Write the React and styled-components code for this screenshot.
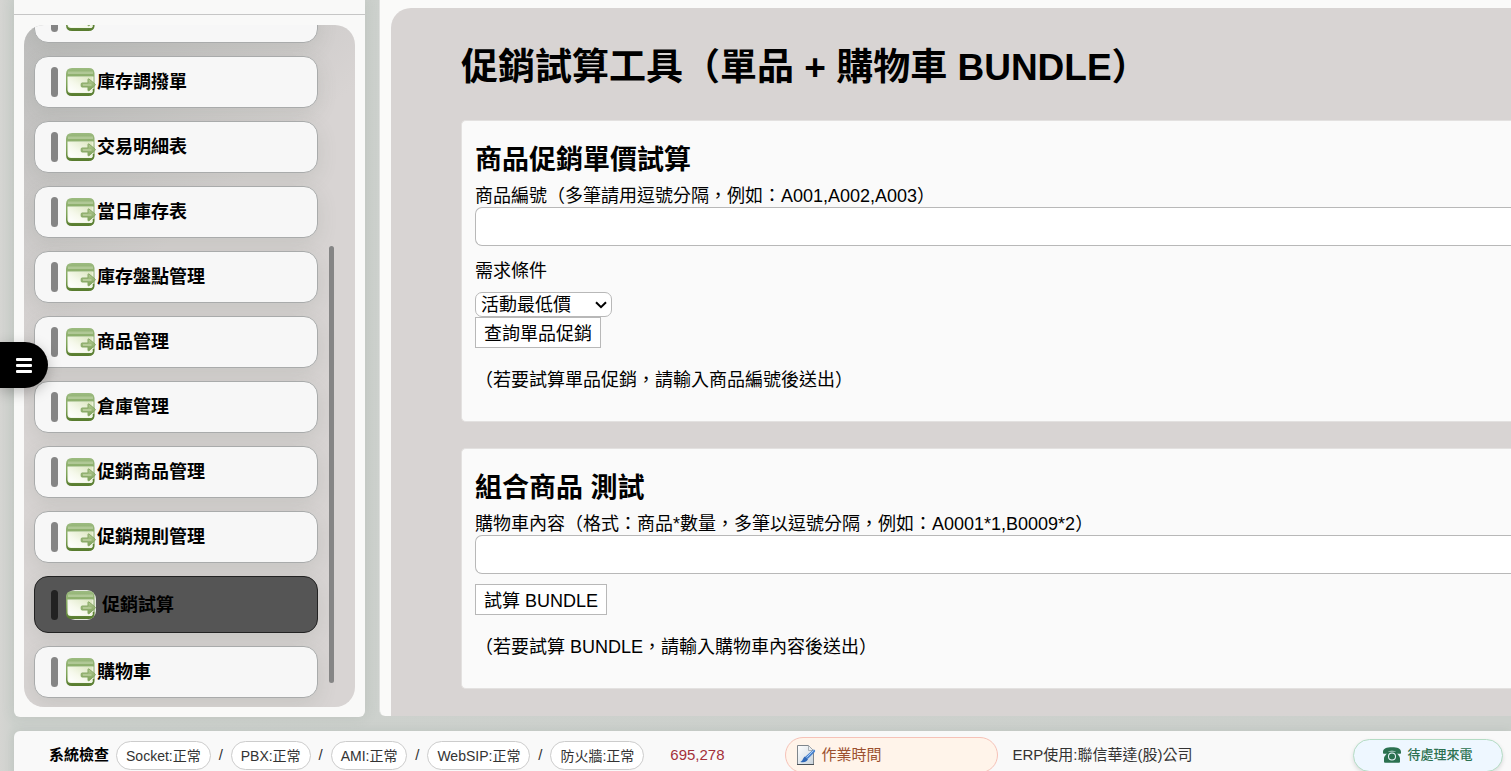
import React from "react";
import styled, { createGlobalStyle } from "styled-components";

const GlobalStyle = createGlobalStyle`
  *, *::before, *::after { box-sizing: border-box; }
  body {
    margin: 0;
    font-family: "Liberation Sans", "Noto Sans CJK TC", sans-serif;
    font-size: 18px;
    line-height: 24px;
    color: #000;
  }
  button, input, select { font: inherit; color: inherit; }
`;

const Page = styled.div`
  height: 100vh;
  overflow: hidden;
  display: flex;
  flex-direction: column;
  gap: 14px;
  padding-left: 14px;
  background: linear-gradient(90deg, #d5d5d2 0, #cdd1cd 14px, #ccd0cc 100%);
`;

const Columns = styled.div`
  flex: 1;
  min-height: 0;
  display: flex;
  gap: 14px;
`;

const Sidebar = styled.aside`
  width: 351px;
  flex: none;
  display: flex;
  flex-direction: column;
  background: #f9f9f8;
  border-radius: 0 0 6px 6px;
  box-shadow: 0 0 14px rgba(90, 110, 100, 0.14);
`;

const SidebarHeader = styled.div`
  height: 15px;
  flex: none;
  border-bottom: 1px solid #c6c6c6;
`;

const MenuPanel = styled.nav`
  flex: 1;
  min-height: 0;
  margin: 10px;
  padding: 0 21px 9px 10px;
  display: flex;
  gap: 11px;
  overflow: hidden;
  border-radius: 20px;
  background: linear-gradient(140deg, #bdbdbc 0, #d8d4d3 260px);
`;

const MenuList = styled.ul`
  flex: 1;
  margin: 0;
  padding: 0;
  list-style: none;
  display: flex;
  flex-direction: column;
  justify-content: flex-end;
  gap: 13px;
`;

const MenuRow = styled.li`
  flex: none;
  display: flex;
`;

const MenuLink = styled.a`
  flex: 1;
  height: ${(p) => (p.$active ? 57 : 52)}px;
  padding-left: 16px;
  display: flex;
  align-items: center;
  border: 1px solid ${(p) => (p.$active ? "#222" : "#a9abab")};
  border-radius: 14px;
  background: ${(p) => (p.$active ? "#555" : "#f7f7f7")};
  box-shadow: 0 6px 20px rgba(90, 105, 95, 0.14);
  color: #000;
  font-weight: 700;
  text-decoration: none;
`;

const Marker = styled.span`
  width: 7px;
  height: 30px;
  margin-right: 8px;
  border-radius: 4px;
  background: ${(p) => (p.$active ? "#222" : "#858585")};
`;

const IconBox = styled.span`
  width: 30px;
  height: 30px;
  margin-right: ${(p) => (p.$active ? 6 : 1)}px;
  border-radius: 9px;
  background: ${(p) => (p.$active ? "#e4e8df" : "transparent")};
  svg { display: block; }
`;

const ScrollThumb = styled.div`
  width: 5px;
  height: 65%;
  margin-bottom: 15px;
  align-self: flex-end;
  border-radius: 3px;
  background: #858585;
`;

const MainPanel = styled.main`
  flex: 1;
  min-width: 0;
  margin-bottom: 1px;
  padding: 8px 0 0 11px;
  display: flex;
  overflow: hidden;
  border-left: 1px solid #dfe0de;
  border-radius: 0 0 0 6px;
  background: #fafaf9;
`;

const Content = styled.div`
  flex: 1;
  min-width: 0;
  padding: 36px 0 0 70px;
  border-radius: 20px 0 0 0;
  background: #d8d4d3;
`;

const Title = styled.h1`
  margin: 0 0 28px;
  font-size: 37px;
  line-height: 48px;
`;

const Card = styled.section`
  margin-bottom: 26px;
  padding: 21px 0 29px 13px;
  display: flex;
  flex-direction: column;
  align-items: flex-start;
  border: 1px solid #e3e1e0;
  border-right: 0;
  border-radius: 5px 0 0 5px;
  background: #fafafa;
`;

const CardTitle = styled.h2`
  margin: 0 0 7px;
  font-size: 27px;
  line-height: 36px;
`;

const FieldLabel = styled.label`
  line-height: 22px;
`;

const TextInput = styled.input`
  width: 100%;
  height: 39px;
  padding: 0 8px;
  border: 1px solid #b8b8b8;
  border-right: 0;
  border-radius: 7px 0 0 7px;
  background: #fff;
`;

const SelectField = styled.div`
  margin-top: 14px;
  display: flex;
  flex-direction: column;
  gap: 10px;
`;

const SelectBox = styled.div`
  position: relative;
  display: flex;
  svg {
    position: absolute;
    right: 5px;
    top: 9px;
    pointer-events: none;
  }
`;

const Select = styled.select`
  width: 137px;
  height: 25px;
  padding: 0 5px;
  appearance: none;
  border: 1px solid #b8b8b8;
  border-radius: 7px;
  background: #fff;
  line-height: 22px;
`;

const SubmitButton = styled.button`
  height: 31px;
  margin-top: ${(p) => (p.$spaced ? 10 : 0)}px;
  padding: 2px 8px 0;
  border: 1px solid #b8b8b8;
  background: #fff;
`;

const Note = styled.p`
  margin: 20px 0 0;
`;

const Footer = styled.footer`
  height: 48px;
  flex: none;
  margin-bottom: -8px;
  padding: 0 8px 0 35px;
  display: flex;
  align-items: center;
  border-radius: 6px 0 0 0;
  background: #f9f9f9;
  box-shadow: 0 0 10px rgba(90, 110, 100, 0.14);
  font-size: 15px;
  color: #333;
  white-space: nowrap;
`;

const CheckTitle = styled.strong`
  margin-right: 7px;
  color: #000;
`;

const StatusPill = styled.span`
  height: 29px;
  padding: 1px 9px 0;
  display: flex;
  align-items: center;
  border: 1px solid #ccc;
  border-radius: 15px;
  background: #fff;
  font-size: 14px;
`;

const Slash = styled.span`
  width: 20px;
  text-align: center;
`;

const Counter = styled.span`
  margin-left: 26px;
  color: #a4303a;
`;

const WorkTime = styled.button`
  width: 213px;
  height: 36px;
  margin: 0 15px 0 60px;
  padding: 0 10px;
  display: flex;
  align-items: center;
  gap: 6px;
  border: 1px solid #f6c2b8;
  border-radius: 18px;
  background: #fff4ea;
  color: #9c5130;
`;

const CallButton = styled.button`
  width: 150px;
  height: 33px;
  margin-left: auto;
  padding: 0;
  display: flex;
  align-items: center;
  justify-content: center;
  gap: 6px;
  border: 1px solid #b4dcc4;
  border-radius: 17px;
  background: #eef7ff;
  box-shadow: 0 2px 4px rgba(0, 0, 0, 0.12);
  color: #2b7150;
  font-size: 13px;
  font-weight: 500;
`;

const DrawerToggle = styled.button`
  position: fixed;
  left: 0;
  top: 342px;
  width: 48px;
  height: 46px;
  padding: 0 16px;
  display: flex;
  flex-direction: column;
  justify-content: center;
  gap: 3px;
  border: 0;
  border-radius: 0 23px 23px 0;
  background: #000;
  box-shadow: 0 4px 14px rgba(0, 0, 0, 0.25);
  span {
    height: 3px;
    border-radius: 1px;
    background: #fff;
  }
`;

function WindowIcon() {
  return (
    <svg width="30" height="30" viewBox="0 0 30 30" aria-hidden="true">
      <defs>
        <linearGradient id="winFrame" x1="0" y1="0" x2="0" y2="1">
          <stop offset="0" stopColor="#9cbb80" />
          <stop offset="0.6" stopColor="#7da257" />
          <stop offset="1" stopColor="#567a2c" />
        </linearGradient>
        <linearGradient id="winBody" x1="0" y1="1" x2="1" y2="0">
          <stop offset="0" stopColor="#ffffff" />
          <stop offset="0.4" stopColor="#f6f9ec" />
          <stop offset="1" stopColor="#dbe6bf" />
        </linearGradient>
        <linearGradient id="winArrow" x1="0" y1="0" x2="0" y2="1">
          <stop offset="0" stopColor="#b4cb94" />
          <stop offset="1" stopColor="#7b9f56" />
        </linearGradient>
      </defs>
      <path d="M6 1h17q5 0 5.500 5v17q0 6-6 6H6q-6 0-6-6V7Q0 1 6 1z" fill="url(#winFrame)" />
      <path d="M2 4.500h25v2.500H2z" fill="#b0c896" />
      <path d="M1.500 9.500h26v14q0 2.500-2.500 2.500H5q-3.500 0-3.500-3.500z" fill="#f4f7ec" />
      <path d="M2.500 10h24v15h-21q-3 0-3-3z" fill="url(#winBody)" />
      <path d="M27.500 22v3q-1 2-3 2.500" fill="none" stroke="#5d8135" strokeWidth="1.500" />
      <path
        d="M16 16h6v-3.500q0-1 1-.5l6 5q.8.700 0 1.400l-6 5.300q-1 .5-1-.5V20h-6q-.8 0-.8-1v-2q0-1 .8-1z"
        fill="url(#winArrow)"
        stroke="#86a765"
      />
      <path d="M17 18h8.500" stroke="#cbdab1" strokeWidth="1.200" />
    </svg>
  );
}

function NoteIcon() {
  return (
    <svg width="20" height="20" viewBox="0 0 20 20" aria-hidden="true">
      <defs>
        <linearGradient id="sheet" x1="0" y1="0" x2="1" y2="1">
          <stop offset="0" stopColor="#fff" />
          <stop offset="1" stopColor="#c9d3dc" />
        </linearGradient>
      </defs>
      <path d="M1.500.5h11l5 5v14h-16z" fill="url(#sheet)" stroke="#7f868c" />
      <path d="M1 19.500h17" stroke="#4a5157" />
      <path d="M12.500.5v5h5z" fill="#e9eef2" stroke="#9aa1a7" strokeWidth=".8" />
      <path d="M16.800 5q1-1 2 0 .8.900 0 1.900l-7 7-2.600-2.200z" fill="#4a83cf" />
      <path d="M17.500 5.500l-7 7" stroke="#a8cbf2" strokeWidth="1" />
      <path d="M9 11.500l3 2.800c-1.200 3-4.500 3.500-7.800 2.600 2.900-.8 2.500-4.300 4.800-5.400z" fill="#2f68b8" />
    </svg>
  );
}

function PhoneIcon() {
  return (
    <svg width="18" height="16" viewBox="0 0 18 16" fill="currentColor" aria-hidden="true">
      <path d="M0 5C0 1.500 3.500.3 9 .3S18 1.500 18 5v1q0 .7-.7.7h-3.600q-.7 0-.7-.7V4.700Q11.500 3.800 9 3.800T5 4.700V6q0 .7-.7.7H.7Q0 6.700 0 6z" />
      <path
        fillRule="evenodd"
        d="M5 4.500h8c.5 2.500 4 4 4 7v3.200q0 1-1 1H2q-1 0-1-1v-3.200c0-3 3.500-4.500 4-7zM9 5.500a4 4 0 1 0 0 8 4 4 0 0 0 0-8zm0 1a3 3 0 1 1 0 6 3 3 0 0 1 0-6z"
      />
    </svg>
  );
}

const menu = [
  "",
  "庫存調撥單",
  "交易明細表",
  "當日庫存表",
  "庫存盤點管理",
  "商品管理",
  "倉庫管理",
  "促銷商品管理",
  "促銷規則管理",
  "促銷試算",
  "購物車",
];

const checks = ["Socket", "PBX", "AMI", "WebSIP", "防火牆"];

export default function App() {
  return (
    <>
      <GlobalStyle />
      <Page>
        <Columns>
          <Sidebar>
            <SidebarHeader />
            <MenuPanel>
              <MenuList>
                {menu.map((name) => {
                  const active = name === "促銷試算";
                  return (
                    <MenuRow key={name}>
                      <MenuLink href="#" $active={active}>
                        <Marker $active={active} />
                        <IconBox $active={active}>
                          <WindowIcon />
                        </IconBox>
                        {name}
                      </MenuLink>
                    </MenuRow>
                  );
                })}
              </MenuList>
              <ScrollThumb />
            </MenuPanel>
          </Sidebar>

          <MainPanel>
            <Content>
              <Title>促銷試算工具（單品 + 購物車 BUNDLE）</Title>

              <Card>
                <CardTitle>商品促銷單價試算</CardTitle>
                <FieldLabel htmlFor="codes">商品編號（多筆請用逗號分隔，例如：A001,A002,A003）</FieldLabel>
                <TextInput id="codes" type="text" />
                <SelectField>
                  <FieldLabel htmlFor="condition">需求條件</FieldLabel>
                  <SelectBox>
                    <Select id="condition">
                      <option>活動最低價</option>
                    </Select>
                    <svg width="12" height="8" viewBox="0 0 12 8" fill="none" stroke="#000" strokeWidth="2" aria-hidden="true">
                      <path d="M1 1.200l5 5 5-5" />
                    </svg>
                  </SelectBox>
                </SelectField>
                <SubmitButton type="button">查詢單品促銷</SubmitButton>
                <Note>（若要試算單品促銷，請輸入商品編號後送出）</Note>
              </Card>

              <Card>
                <CardTitle>組合商品 測試</CardTitle>
                <FieldLabel htmlFor="cart">購物車內容（格式：商品*數量，多筆以逗號分隔，例如：A0001*1,B0009*2）</FieldLabel>
                <TextInput id="cart" type="text" />
                <SubmitButton type="button" $spaced>試算 BUNDLE</SubmitButton>
                <Note>（若要試算 BUNDLE，請輸入購物車內容後送出）</Note>
              </Card>
            </Content>
          </MainPanel>
        </Columns>

        <Footer>
          <CheckTitle>系統檢查</CheckTitle>
          {checks.map((name, i) => (
            <React.Fragment key={name}>
              {i > 0 && <Slash>/</Slash>}
              <StatusPill>{name}:正常</StatusPill>
            </React.Fragment>
          ))}
          <Counter>695,278</Counter>
          <WorkTime type="button">
            <NoteIcon />
            作業時間
          </WorkTime>
          <span>ERP使用:聯信華達(股)公司</span>
          <CallButton type="button">
            <PhoneIcon />
            待處理來電
          </CallButton>
        </Footer>
      </Page>
      <DrawerToggle type="button" aria-label="選單">
        <span />
        <span />
        <span />
      </DrawerToggle>
    </>
  );
}
